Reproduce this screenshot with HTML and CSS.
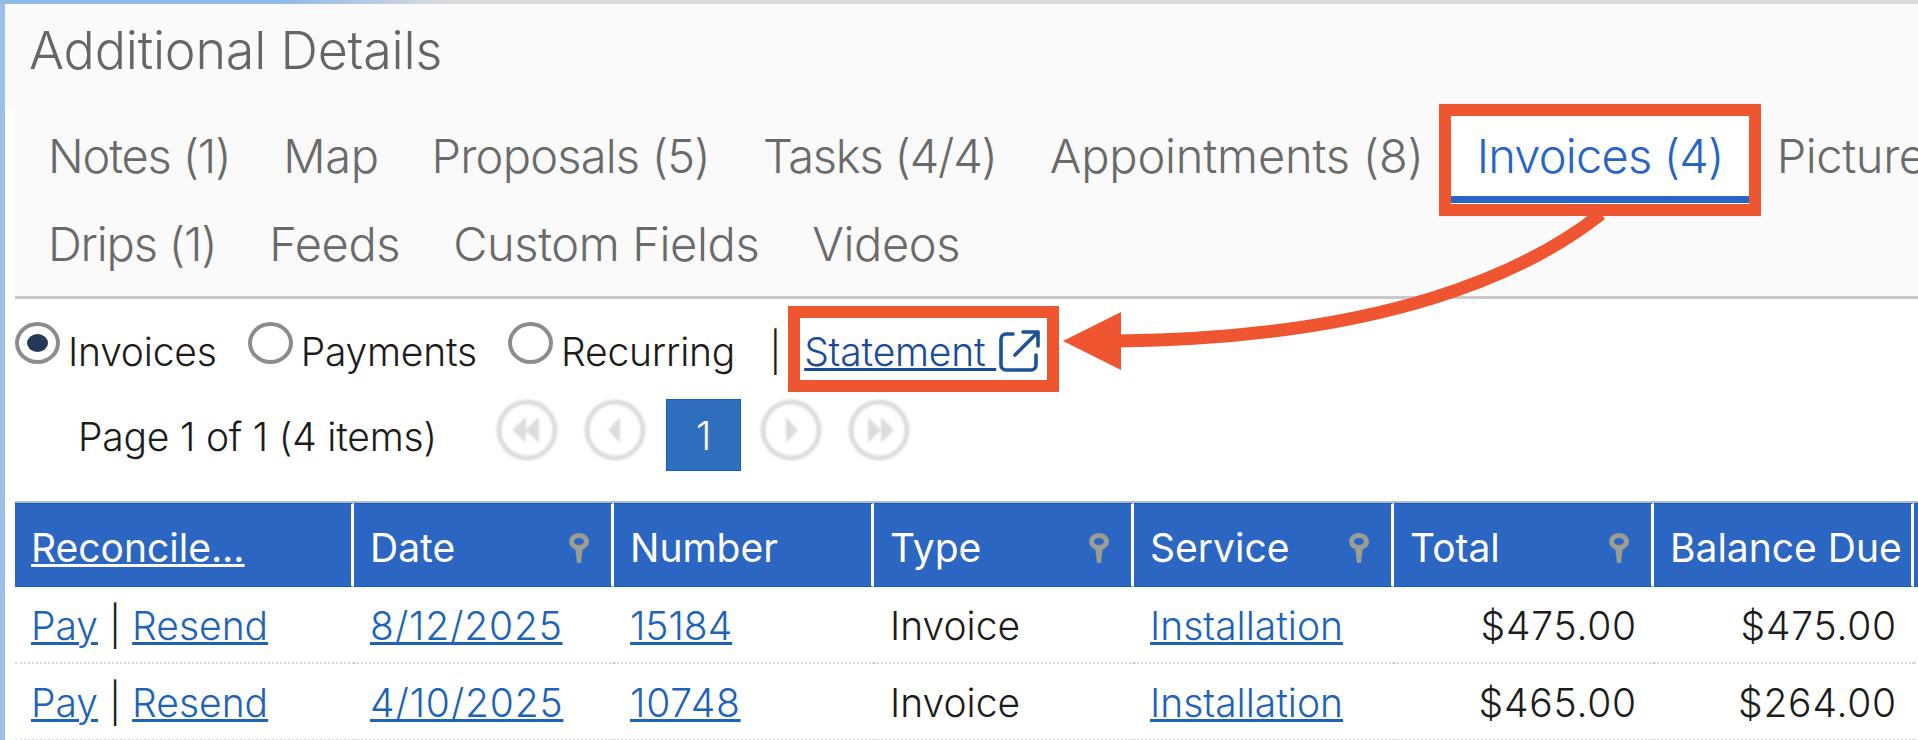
FILE: index.html
```html
<!DOCTYPE html>
<html lang="en">
<head>
<meta charset="utf-8">
<title>Additional Details</title>
<link rel="stylesheet" href="styles.css">
</head>
<body>
<div class="topstrip"></div>
<div class="frame">
  <h1 class="title">Additional Details</h1>
  <div class="content">
    <nav class="tabs">
      <div class="tabrow">
        <a class="tab tight">Notes (1)</a><a class="tab">Map</a><a class="tab snug">Proposals (5)</a><a class="tab tight">Tasks (4/4)</a><a class="tab wide">Appointments (8)</a><a class="tab snug active">Invoices (4)</a><a class="tab">Pictures</a>
      </div>
      <div class="tabrow">
        <a class="tab tight">Drips (1)</a><a class="tab">Feeds</a><a class="tab">Custom Fields</a><a class="tab">Videos</a>
      </div>
    </nav>
    <div class="filters">
      <span class="radio on"></span><span class="rlabel">Invoices</span>
      <span class="radio"></span><span class="rlabel">Payments</span>
      <span class="radio"></span><span class="rlabel">Recurring</span>
      <span class="pipe">|</span>
      <a class="statement"><span class="stext">Statement&nbsp;</span>
        <svg class="exticon" viewBox="0 0 42 42" fill="none" stroke="#1c5296" stroke-width="3.6" stroke-linecap="round" stroke-linejoin="round"><path d="M15 4H8a5 5 0 0 0-5 5v26a5 5 0 0 0 5 5h25a5 5 0 0 0 5-5V25"/><path d="M17 25L40 2M25 2h15v14"/></svg>
      </a>
    </div>
    <div class="pager">
      <span class="pageinfo">Page 1 of 1 (4 items)</span>
      <svg class="pbtn" viewBox="0 0 62 62"><circle class="ring" cx="31" cy="31" r="28"/><path class="tri" d="M30 18V44L16 31ZM43 18V44L29 31Z"/></svg>
      <svg class="pbtn" viewBox="0 0 62 62"><circle class="ring" cx="31" cy="31" r="28"/><path class="tri" d="M36 18V44L24 31Z"/></svg>
      <span class="pcur">1</span>
      <svg class="pbtn" viewBox="0 0 62 62"><circle class="ring" cx="31" cy="31" r="28"/><path class="tri" d="M26 18V44L38 31Z"/></svg>
      <svg class="pbtn" viewBox="0 0 62 62"><circle class="ring" cx="31" cy="31" r="28"/><path class="tri" d="M20 18V44L33 31ZM33 18V44L46 31Z"/></svg>
    </div>
    <table class="grid">
      <colgroup><col class="c1"><col class="cn"><col class="cn"><col class="cn"><col class="cn"><col class="cn"><col class="cn"><col class="cl"></colgroup>
      <thead>
        <tr>
          <th><u>Reconcile...</u></th>
          <th>Date<svg class="pin" viewBox="0 0 22 30"><ellipse cx="11" cy="8.5" rx="7.5" ry="6" fill="none" stroke="#9b9c93" stroke-width="5"/><path d="M7 14h8l-2 16h-4z" fill="#9b9c93"/></svg></th>
          <th>Number</th>
          <th>Type<svg class="pin" viewBox="0 0 22 30"><ellipse cx="11" cy="8.5" rx="7.5" ry="6" fill="none" stroke="#9b9c93" stroke-width="5"/><path d="M7 14h8l-2 16h-4z" fill="#9b9c93"/></svg></th>
          <th>Service<svg class="pin" viewBox="0 0 22 30"><ellipse cx="11" cy="8.5" rx="7.5" ry="6" fill="none" stroke="#9b9c93" stroke-width="5"/><path d="M7 14h8l-2 16h-4z" fill="#9b9c93"/></svg></th>
          <th>Total<svg class="pin" viewBox="0 0 22 30"><ellipse cx="11" cy="8.5" rx="7.5" ry="6" fill="none" stroke="#9b9c93" stroke-width="5"/><path d="M7 14h8l-2 16h-4z" fill="#9b9c93"/></svg></th>
          <th>Balance Due</th>
          <th></th>
        </tr>
      </thead>
      <tbody>
        <tr>
          <td><a>Pay</a> | <a>Resend</a></td><td><a class="n">8/12/2025</a></td><td><a>15184</a></td><td>Invoice</td><td><a>Installation</a></td><td class="num">$475.00</td><td class="num">$475.00</td><td></td>
        </tr>
        <tr>
          <td><a>Pay</a> | <a>Resend</a></td><td><a class="n">4/10/2025</a></td><td><a class="n">10748</a></td><td>Invoice</td><td><a>Installation</a></td><td class="num">$465.00</td><td class="num">$264.00</td><td></td>
        </tr>
      </tbody>
    </table>
  </div>
</div>
<div class="callout callout-tab"></div>
<div class="callout callout-stmt"></div>
<svg class="arrow" viewBox="0 0 1918 740">
  <path class="arrowline" d="M1601 214C1530 270 1390 338 1118 341"/>
  <path class="arrowhead" d="M1063 341L1121 312V370Z"/>
</svg>
</body>
</html>
```
FILE: styles.css
```css
* { box-sizing: border-box; }
html, body { margin: 0; height: 740px; overflow: hidden; background: #fff; }
body { font-family: Inter, "Liberation Sans", sans-serif; color: #1c1c1c; position: relative; }
.topstrip { height: 4px; background: linear-gradient(90deg, #8fb8e8 0, #8fb8e8 280px, #dcdcdc 450px, #dcdcdc 100%); }
.frame { border-left: 5px solid #9cc0ea; height: 736px; }
.title { margin: 0; height: 106px; padding: 17px 0 0 24px; background: #fafafa; font-size: 52px; font-weight: 300; line-height: 60px; letter-spacing: -.22px; color: #666; }
.content { padding-left: 10px; }
.tabs { height: 189px; background: #fafafa; border-bottom: 3px solid #c9c9c9; padding: 2px 0 0 33px; }
.tabrow { display: flex; gap: 53px; height: 88px; white-space: nowrap; }
.tab { font-size: 47px; font-weight: 300; line-height: 88px; letter-spacing: -.4px; color: #6a6a6a; height: 88px; }
.tab.tight { letter-spacing: -1.2px; }
.tab.snug { letter-spacing: -.8px; }
.tab.wide { letter-spacing: -.2px; }
.tab.active { color: #2664c6; position: relative; z-index: 0; }
.tab.active::before { content: ""; position: absolute; z-index: -1; left: -26px; right: -29px; top: 4px; height: 88px; background: #fff; }
.tab.active::after { content: ""; position: absolute; left: -26px; right: -29px; top: 84px; height: 7px; background: #2664c6; }
.filters { display: flex; align-items: center; height: 88px; padding-top: 16px; font-size: 39px; font-weight: 300; letter-spacing: -.2px; white-space: nowrap; }
.radio { width: 45px; height: 42px; border: 4px solid #8c8c8c; border-radius: 50%; background: #fff; flex: none; margin-bottom: 16px; position: relative; }
.radio.on::after { content: ""; position: absolute; inset: 8px; border-radius: 50%; background: #24395a; }
.rlabel { margin: 0 31px 0 8px; }
.pipe { margin-left: 3px; }
.statement { display: flex; align-items: center; margin-left: 23px; color: #1a4a9a; }
.stext { text-decoration: underline; }
.exticon { width: 42px; height: 42px; margin-left: 2px; }
.pager { display: flex; align-items: center; height: 114px; padding: 0 0 16px 63px; font-size: 39px; font-weight: 300; letter-spacing: -.2px; }
.pageinfo { width: 418px; white-space: nowrap; }
.pbtn { width: 62px; height: 62px; margin: 12px 26px 0 0; flex: none; align-self: flex-start; filter: blur(.8px); }
.ring { fill: none; stroke: #dddddd; stroke-width: 5; }
.tri { fill: #dcdcdc; }
.pcur { width: 75px; height: 72px; margin: 12px 19px 0 -6px; background: #2f6fbe; border: 1px solid #0f5fc0; color: #fff; display: flex; align-items: center; justify-content: center; flex: none; align-self: flex-start; }
.grid { border-collapse: separate; border-spacing: 0; table-layout: fixed; width: 1906px; border-top: 2px solid #bbb; font-size: 39px; font-weight: 300; }
.c1 { width: 339px; }
.cn { width: 260px; }
.cl { width: 7px; }
.grid th { height: 84px; padding: 5px 0 0 16px; background: #2b66c2; border: solid #0a5bcb; border-width: 1px 0; border-right: 3px solid #fff; color: #fff; font-weight: 400; text-align: left; white-space: nowrap; position: relative; overflow: hidden; }
.pin { position: absolute; right: 21px; top: 29px; width: 22px; height: 30px; filter: blur(.5px); }
.grid td { height: 77px; padding: 2px 0 0 16px; border-bottom: 2px dotted #d8d8d8; white-space: nowrap; overflow: hidden; }
.grid td.num { text-align: right; padding-right: 17px; letter-spacing: .8px; }
.grid td a { color: #1d63b8; text-decoration: underline; }
.grid td a.n { letter-spacing: .8px; }
.callout { position: absolute; border: 12px solid #ee5530; }
.callout-tab { left: 1439px; top: 104px; width: 322px; height: 112px; }
.callout-stmt { left: 788px; top: 306px; width: 271px; height: 86px; }
.arrow { position: absolute; left: 0; top: 0; width: 1918px; height: 740px; pointer-events: none; }
.arrowline { fill: none; stroke: #ee5530; stroke-width: 13; }
.arrowhead { fill: #ee5530; }
```
